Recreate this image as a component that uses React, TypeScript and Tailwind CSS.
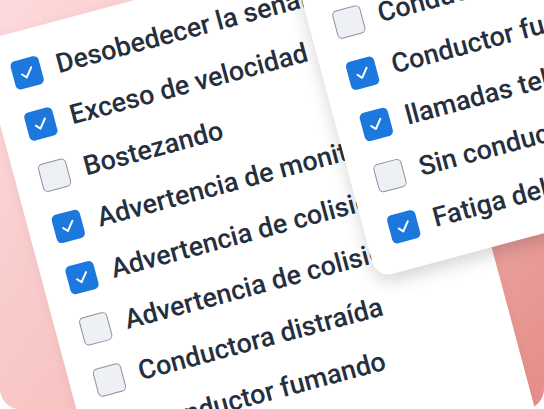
import React from 'react';

type Item = { label: string; checked: boolean };

const MAIN_ITEMS: Item[] = [
  { label: 'Desobedecer la señal', checked: true },
  { label: 'Exceso de velocidad', checked: true },
  { label: 'Bostezando', checked: false },
  { label: 'Advertencia de monitoreo', checked: true },
  { label: 'Advertencia de colisión frontal', checked: true },
  { label: 'Advertencia de colisión peatonal', checked: false },
  { label: 'Conductora distraída', checked: false },
  { label: 'Conductor fumando', checked: false },
];

const SIDE_ITEMS: Item[] = [
  { label: 'Conductor con sueño', checked: true },
  { label: 'Conductor bebiendo', checked: false },
  { label: 'Conductor fumando', checked: true },
  { label: 'llamadas telefónicas', checked: true },
  { label: 'Sin conductor', checked: false },
  { label: 'Fatiga del conductor', checked: true },
];

const Checkbox = ({ checked }: { checked: boolean }) =>
  checked ? (
    <span className="flex h-[29px] w-[29px] shrink-0 items-center justify-center rounded-[5px] bg-[#1d78de]">
      <svg viewBox="0 0 29 29" className="h-[29px] w-[29px]">
        <path d="M9.2 14.8 L12.9 18.8 L19.8 10.2" fill="none" stroke="#fff" strokeWidth="2" strokeLinecap="round" strokeLinejoin="round" />
      </svg>
    </span>
  ) : (
    <span className="h-[29px] w-[29px] shrink-0 rounded-[5px] border-[1.5px] border-[#8c9199] bg-[#eef0f6]" />
  );

const Row = ({ item }: { item: Item }) => (
  <div className="flex h-[53px] items-center gap-4">
    <Checkbox checked={item.checked} />
    <span className="whitespace-nowrap text-[27px] font-medium leading-none text-[#262f3d]">{item.label}</span>
  </div>
);

export default function App() {
  return (
    <div className="relative h-[409px] w-[544px] overflow-hidden bg-white font-['Roboto',sans-serif]">
      {/* pink backdrop */}
      <div className="absolute inset-0 rounded-b-[20px] bg-[linear-gradient(125deg,#fddadc_0%,#f6c2c0_45%,#e58d89_100%)]" />

      {/* main list card */}
      <div className="absolute left-[-21.6px] top-[41.5px] h-[560px] w-[443px] origin-top-left rotate-[-15deg] overflow-hidden rounded-[20px] bg-white py-4 pl-[25px] shadow-[0_2px_10px_rgba(180,80,80,0.12)]">
        {MAIN_ITEMS.map((item, i) => (
          <Row key={i} item={item} />
        ))}
      </div>

      {/* overlapping card */}
      <div className="absolute left-[285.9px] top-[-60.1px] w-[420px] origin-top-left rotate-[-15deg] overflow-hidden rounded-2xl bg-white py-4 pl-[25px] shadow-[0_6px_18px_rgba(0,0,0,0.18)]">
        {SIDE_ITEMS.map((item, i) => (
          <Row key={i} item={item} />
        ))}
      </div>
    </div>
  );
}
